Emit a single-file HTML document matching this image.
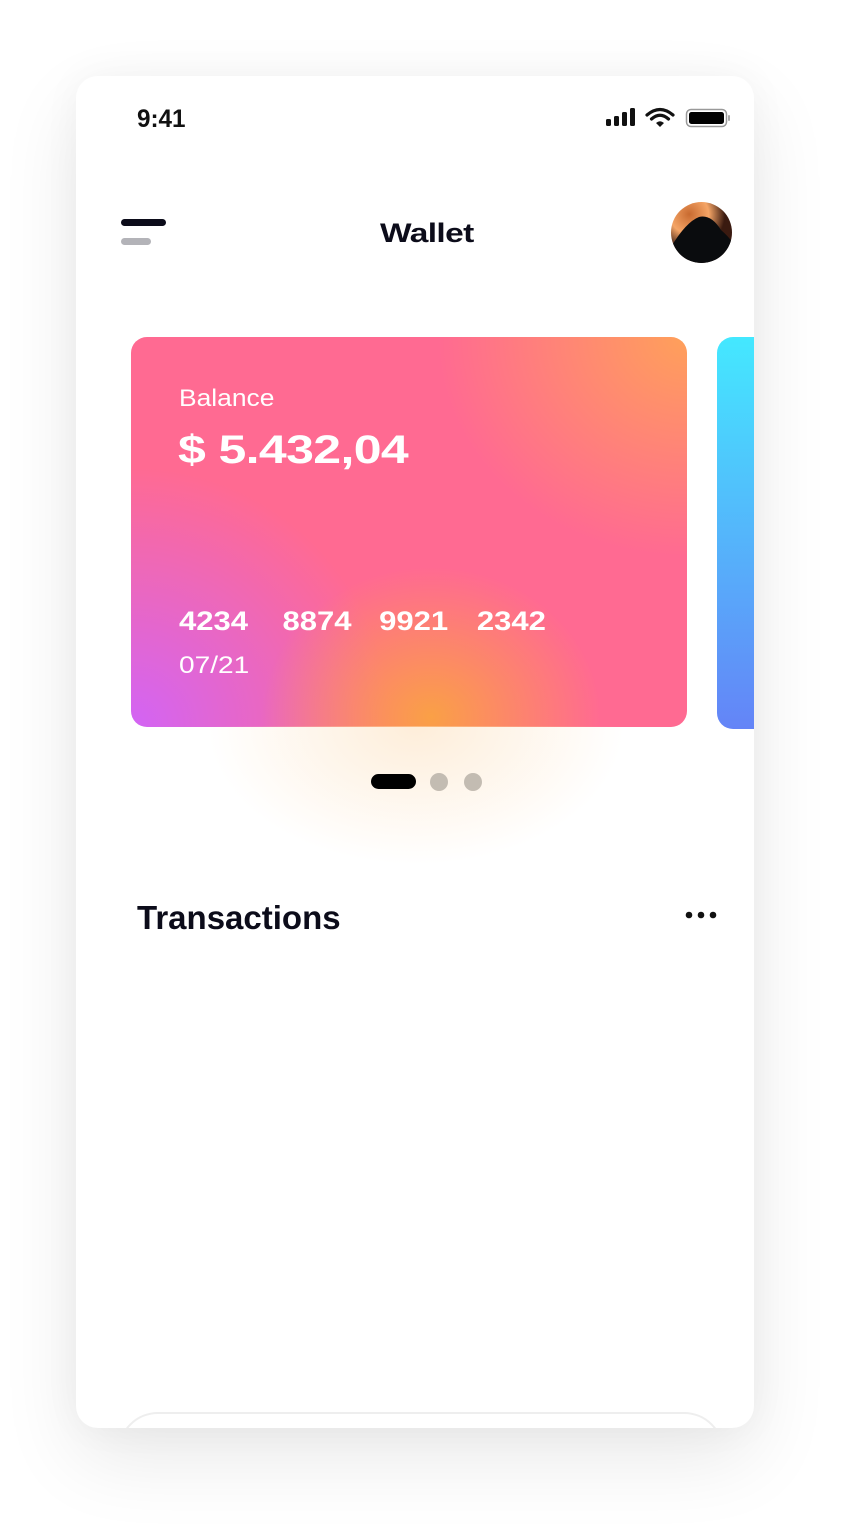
<!DOCTYPE html>
<html><head><meta charset="utf-8"><style>
*{margin:0;padding:0;box-sizing:border-box}
body{width:866px;height:1540px;background:#fff;position:relative;overflow:hidden;font-family:"Liberation Sans",sans-serif}
.phone{position:absolute;left:76px;top:76px;width:678px;height:1352px;background:#fff;border-radius:22px;box-shadow:0 30px 80px rgba(0,0,0,0.09),0 0 40px rgba(0,0,0,0.04);overflow:hidden}
.abs{position:absolute}
.card{left:55px;top:261px;width:556px;height:390px;border-radius:16px;overflow:hidden;
background:
radial-gradient(ellipse 170px 150px at 300px 380px,rgba(250,160,70,1),rgba(250,160,70,0) 100%),
radial-gradient(ellipse 260px 260px at 0px 390px,rgba(210,100,245,1),rgba(210,100,245,0) 100%),
radial-gradient(ellipse 250px 220px at 556px 0px,rgba(255,160,90,1),rgba(255,160,90,0) 100%),
#ff6a92}
.card2{left:641px;top:261px;width:60px;height:392px;border-radius:16px;background:linear-gradient(#44e8ff,#6484f7)}
.w{color:#fff;position:absolute;transform-origin:0 0;white-space:nowrap}
</style></head><body>
<div class="phone">
<div class="abs" style="left:61px;top:29px;font-size:25px;color:#111;font-weight:bold;transform:scaleX(0.97);transform-origin:0 0">9:41</div>
<svg class="abs" style="left:529px;top:31px" width="126" height="22" viewBox="0 0 126 22">
<rect x="1" y="12" width="5" height="7" rx="1.5" fill="#111"/><rect x="9" y="9" width="5" height="10" rx="1.5" fill="#111"/><rect x="17" y="5" width="5" height="14" rx="1.5" fill="#111"/><rect x="25" y="1" width="5" height="18" rx="1.5" fill="#111"/>
<path d="M42 8 Q55 -3 68 8" stroke="#111" stroke-width="3.2" fill="none" stroke-linecap="round"/><path d="M46.5 12 Q55 4.5 63.5 12" stroke="#111" stroke-width="3.2" fill="none" stroke-linecap="round"/><path d="M51 16 L55 20 L59 16 Q55 12.5 51 16Z" fill="#111"/>
<rect x="81.5" y="2.5" width="40" height="17" rx="4.5" fill="none" stroke="#999" stroke-width="1.5"/><rect x="84" y="5" width="35" height="12" rx="2.5" fill="#000"/><rect x="123" y="8" width="2" height="6" rx="1" fill="#aaa"/>
</svg>
<div class="abs" style="left:45px;top:143px;width:45px;height:7px;border-radius:4px;background:#0c0c1a"></div>
<div class="abs" style="left:45px;top:162px;width:30px;height:7px;border-radius:4px;background:#b3b3b8"></div>
<div class="abs" style="left:304px;top:142px;font-size:27px;font-weight:bold;color:#0c0c1a;letter-spacing:-0.5px;transform:scaleX(1.24);transform-origin:0 0">Wallet</div>
<div class="abs" style="left:595px;top:126px;width:61px;height:61px;border-radius:50%;overflow:hidden;background:radial-gradient(circle at 30% 20%,#c86a30,#f5a566 30%,#3a1a10 55%);">
<svg width="61" height="61"><path d="M0 45 Q15 20 28 15 Q40 12 50 28 Q58 35 61 40 L61 61 L0 61Z" fill="#0a0c0e"/></svg></div>
<div class="abs card">
<div class="w" style="left:48px;top:48px;font-size:24px;transform:scaleX(1.1)">Balance</div>
<div class="w" style="left:47px;top:91px;font-size:40px;font-weight:bold;letter-spacing:-0.5px;transform:scaleX(1.25)">$ 5.432,04</div>
<div class="w" style="left:48px;top:269px;font-size:27px;font-weight:bold;transform:scaleX(1.15)"><span style="display:inline-block;width:90px">4234</span><span style="display:inline-block;width:84px">8874</span><span style="display:inline-block;width:85px">9921</span>2342</div>
<div class="w" style="left:48px;top:315px;font-size:24px;transform:scaleX(1.17)">07/21</div>
</div>
<div class="abs card2"></div>
<div class="abs" style="left:130px;top:650px;width:420px;height:140px;background:radial-gradient(ellipse at 50% 0%,rgba(253,220,180,0.5),rgba(255,240,220,0) 70%)"></div>
<div class="abs" style="left:295px;top:698px;width:45px;height:15px;border-radius:8px;background:#000"></div>
<div class="abs" style="left:354px;top:697px;width:18px;height:18px;border-radius:50%;background:#c3bcb2"></div>
<div class="abs" style="left:388px;top:697px;width:18px;height:18px;border-radius:50%;background:#c3bcb2"></div>
<div class="abs" style="left:61px;top:823px;font-size:33px;color:#0c0c1a;font-weight:bold;transform:scaleX(1.0);transform-origin:0 0;white-space:nowrap">Transactions</div>
<svg class="abs" style="left:608px;top:834px" width="34" height="10"><circle cx="5" cy="5" r="3.3" fill="#111"/><circle cx="17" cy="5" r="3.3" fill="#111"/><circle cx="29" cy="5" r="3.3" fill="#111"/></svg>
<div class="abs" style="left:42px;top:1336px;width:606px;height:80px;border-radius:40px;border:2px solid #eee"></div>
</div>
</body></html>
